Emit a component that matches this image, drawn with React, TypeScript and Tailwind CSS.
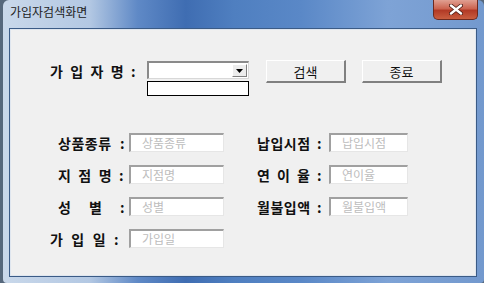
import React from 'react';

const font = { fontFamily: '"Noto Sans CJK KR", "Liberation Sans", sans-serif' };

const Field = ({ text, w }: { text: string; w: string }) => (
  <div className={`${w} h-[19px] bg-white border-t-2 border-l-2 border-t-[#a0a0a0] border-l-[#a0a0a0] border-b border-r border-b-[#e6e6e6] border-r-[#e6e6e6] flex items-center pl-[11px] text-[12px] text-[#bdbdbd] leading-none`}>
    {text}
  </div>
);

const Label = ({ chars, w }: { chars: string[]; w: string }) => (
  <div className={`${w} flex items-center justify-between text-[14px] font-bold text-[#111] leading-none tracking-[0.5px]`}>
    {chars.map((c, i) => (
      <span key={i}>{c}</span>
    ))}
  </div>
);

const Btn = ({ text }: { text: string }) => (
  <div className="w-[80px] h-[23px] bg-[#f0f0f0] border-t border-l border-t-white border-l-white border-b-2 border-r-2 border-b-[#808080] border-r-[#808080] flex items-center justify-center text-[13px] text-[#111] leading-none">
    {text}
  </div>
);

export default function App() {
  return (
    <div className="w-[484px] h-[283px] bg-[#56687c] flex" style={font}>
      <div className="ml-[3px] w-[481px] h-[283px] rounded-t-[6px] rounded-b-[4px] flex flex-col bg-[linear-gradient(90deg,#c9d8ea_0%,#b3c8e3_18%,#5f89c6_28%,#3f6db2_38%,#4f7fc0_48%,#5a88c7_62%,#7ea3d6_80%,#7399ce_100%)]">
        {/* title bar */}
        <div className="h-[28px] flex items-start justify-between pl-[7px] pr-[6px] shrink-0">
          <span className="mt-[6px] text-[12px] text-[#1c1c1c] leading-none">가입자검색화면</span>
          <div className="w-[45px] h-[20px] rounded-b-[5px] bg-[linear-gradient(180deg,#e0a092_0%,#cc6450_45%,#b23a26_55%,#c95e40_100%)] border border-[#6d2a20] border-t-0 flex items-center justify-center">
            <svg width="14" height="11" viewBox="0 0 14 11">
              <path d="M2 1.5 L12 9.5 M12 1.5 L2 9.5" stroke="#4a1a12" strokeWidth="4" strokeLinecap="round" />
              <path d="M2 1.5 L12 9.5 M12 1.5 L2 9.5" stroke="#ffffff" strokeWidth="2.4" strokeLinecap="round" />
            </svg>
          </div>
        </div>
        {/* client */}
        <div className="flex-1 mb-[6px] ml-[6px] mr-[7px] border border-[#3b5b86] bg-[#f0f0f0]">
          <div className="h-full bg-[#f0f0f0] border border-[#dfe6ef] flex flex-col">
            {/* top row */}
            <div className="flex items-start pt-[31px] pl-[39px]">
              <div className="w-[86px] mt-[3px]">
                <Label chars={['가', '입', '자', '명', ':']} w="w-[86px]" />
              </div>
              <div className="ml-[11px] flex flex-col">
                <div className="w-[102px] h-[18px] bg-white border-t-2 border-l-2 border-t-[#8a8a8a] border-l-[#8a8a8a] border-b border-r border-b-[#d8d8d8] border-r-[#d8d8d8] flex justify-end p-[1px]">
                  <div className="w-[15px] h-full bg-[#ececec] border-t border-l border-t-white border-l-white border-b border-r border-b-[#808080] border-r-[#808080] flex items-center justify-center">
                    <svg width="7" height="4" viewBox="0 0 7 4">
                      <path d="M0 0 L7 0 L3.5 4 Z" fill="#000" />
                    </svg>
                  </div>
                </div>
                <div className="mt-[2px] w-[102px] h-[15px] bg-white border border-black" />
              </div>
              <div className="ml-[17px] -mt-[1px] flex gap-[16px]">
                <Btn text="검색" />
                <Btn text="종료" />
              </div>
            </div>
            {/* grid */}
            <div className="mt-[37px] pl-[47px] flex flex-col gap-[13px]">
              <div className="flex items-center h-[19px]">
                <Label chars={['상품종류', ':']} w="w-[67px]" />
                <div className="ml-[4px]"><Field text="상품종류" w="w-[95px]" /></div>
                <div className="ml-[33px]"><Label chars={['납입시점', ':']} w="w-[65px]" /></div>
                <div className="ml-[7px]"><Field text="납입시점" w="w-[79px]" /></div>
              </div>
              <div className="flex items-center h-[19px]">
                <Label chars={['지', '점', '명', ':']} w="w-[66px]" />
                <div className="ml-[5px]"><Field text="지점명" w="w-[95px]" /></div>
                <div className="ml-[33px]"><Label chars={['연', '이', '율', ':']} w="w-[65px]" /></div>
                <div className="ml-[7px]"><Field text="연이율" w="w-[79px]" /></div>
              </div>
              <div className="flex items-center h-[19px]">
                <Label chars={['성', '별', ':']} w="w-[67px]" />
                <div className="ml-[4px]"><Field text="성별" w="w-[95px]" /></div>
                <div className="ml-[33px]"><Label chars={['월불입액', ':']} w="w-[65px]" /></div>
                <div className="ml-[7px]"><Field text="월불입액" w="w-[79px]" /></div>
              </div>
              <div className="flex items-center h-[19px] -ml-[8px]">
                <Label chars={['가', '입', '일', ':']} w="w-[69px]" />
                <div className="ml-[10px]"><Field text="가입일" w="w-[95px]" /></div>
              </div>
            </div>
          </div>
        </div>
      </div>
    </div>
  );
}
